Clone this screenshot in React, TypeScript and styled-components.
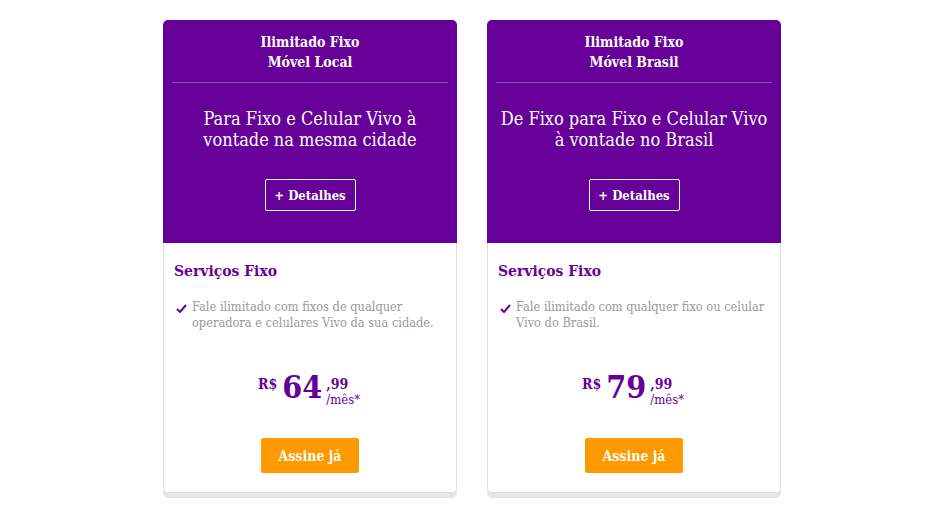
import React from "react";
import styled, { createGlobalStyle } from "styled-components";

const Global = createGlobalStyle`
  html, body { margin: 0; padding: 0; background: #ffffff; }
  body { font-family: "DejaVu Serif Condensed", "DejaVu Serif", serif; font-stretch: condensed; }
`;

const Page = styled.div`
  width: 927px;
  height: 521px;
  box-sizing: border-box;
  padding: 20px 0 0 163px;
  display: flex;
  gap: 30px;
  align-items: flex-start;
`;

const Card = styled.div`
  width: 294px;
  border-radius: 5px;
  box-shadow: 0 5px 0 #e6e6e6;
  background: #fff;
  display: flex;
  flex-direction: column;
`;

const Header = styled.div`
  background: #660099;
  border-radius: 5px 5px 0 0;
  height: 223px;
  box-sizing: border-box;
  padding: 12px 9px 0;
  display: flex;
  flex-direction: column;
  align-items: center;
  color: #fff;
`;

const Title = styled.div`
  font-weight: bold;
  font-size: 14px;
  line-height: 20px;
  text-align: center;
  width: 100%;
  padding-bottom: 10px;
  border-bottom: 1px solid #8a4db0;
`;

const Desc = styled.div`
  margin-top: 25px;
  font-size: 18px;
  line-height: 21px;
  text-align: center;
  height: 42px;
`;

const Details = styled.button`
  margin-top: 29px;
  width: 91px;
  height: 32px;
  border: 1px solid #fff;
  border-radius: 2px;
  background: transparent;
  color: #fff;
  font-family: inherit;
  font-stretch: condensed;
  font-weight: bold;
  font-size: 13px;
  padding: 0;
  cursor: pointer;
`;

const Body = styled.div`
  border: 1px solid #dddddd;
  border-top: none;
  border-radius: 0 0 5px 5px;
  height: 250px;
  box-sizing: border-box;
  padding: 17px 6px 0 10px;
  display: flex;
  flex-direction: column;
`;

const Section = styled.div`
  color: #660099;
  font-weight: bold;
  font-size: 15.5px;
  line-height: 22px;
`;

const Feature = styled.div`
  margin-top: 17px;
  display: flex;
  gap: 5px;
  padding-left: 2px;
  color: #999999;
  font-size: 12.7px;
  line-height: 16px;
`;

const Check = styled.svg`
  flex: none;
  margin-top: 5px;
`;

const Price = styled.div`
  margin-top: 40px;
  display: flex;
  justify-content: center;
  align-items: flex-start;
  color: #660099;
  padding-right: 6px;
`;

const Currency = styled.span`
  font-weight: bold;
  font-size: 14px;
  line-height: 14px;
  margin-top: 6px;
  margin-right: 5px;
`;

const Amount = styled.span`
  font-weight: bold;
  font-size: 32px;
  line-height: 32px;
`;

const Cents = styled.div`
  display: flex;
  flex-direction: column;
  margin-left: 4px;
  margin-top: 6px;
`;

const CentsValue = styled.span`
  font-weight: bold;
  font-size: 14px;
  line-height: 14px;
`;

const PerMonth = styled.span`
  font-size: 13px;
  line-height: 18px;
`;

const Subscribe = styled.button`
  align-self: center;
  margin: 29px 0 0 -4px;
  width: 98px;
  height: 35px;
  border: none;
  border-radius: 2px;
  background: #ff9900;
  color: #fff;
  font-family: inherit;
  font-stretch: condensed;
  font-weight: bold;
  font-size: 14px;
  padding: 0;
  cursor: pointer;
`;

type Plan = {
  title: [string, string];
  desc: [string, string];
  feature: string;
  price: string;
};

const plans: Plan[] = [
  {
    title: ["Ilimitado Fixo", "Móvel Local"],
    desc: ["Para Fixo e Celular Vivo à", "vontade na mesma cidade"],
    feature: "Fale ilimitado com fixos de qualquer operadora e celulares Vivo da sua cidade.",
    price: "64",
  },
  {
    title: ["Ilimitado Fixo", "Móvel Brasil"],
    desc: ["De Fixo para Fixo e Celular Vivo", "à vontade no Brasil"],
    feature: "Fale ilimitado com qualquer fixo ou celular Vivo do Brasil.",
    price: "79",
  },
];

export default function App() {
  return (
    <>
      <Global />
      <Page>
        {plans.map((p) => (
          <Card key={p.price}>
            <Header>
              <Title>
                {p.title[0]}
                <br />
                {p.title[1]}
              </Title>
              <Desc>
                {p.desc[0]}
                <br />
                {p.desc[1]}
              </Desc>
              <Details>+ Detalhes</Details>
            </Header>
            <Body>
              <Section>Serviços Fixo</Section>
              <Feature>
                <Check width="11" height="9" viewBox="0 0 11 9">
                  <path d="M1 5 L4 8 L10 1" fill="none" stroke="#660099" strokeWidth="2" />
                </Check>
                <span>{p.feature}</span>
              </Feature>
              <Price>
                <Currency>R$</Currency>
                <Amount>{p.price}</Amount>
                <Cents>
                  <CentsValue>,99</CentsValue>
                  <PerMonth>/mês*</PerMonth>
                </Cents>
              </Price>
              <Subscribe>Assine já</Subscribe>
            </Body>
          </Card>
        ))}
      </Page>
    </>
  );
}
